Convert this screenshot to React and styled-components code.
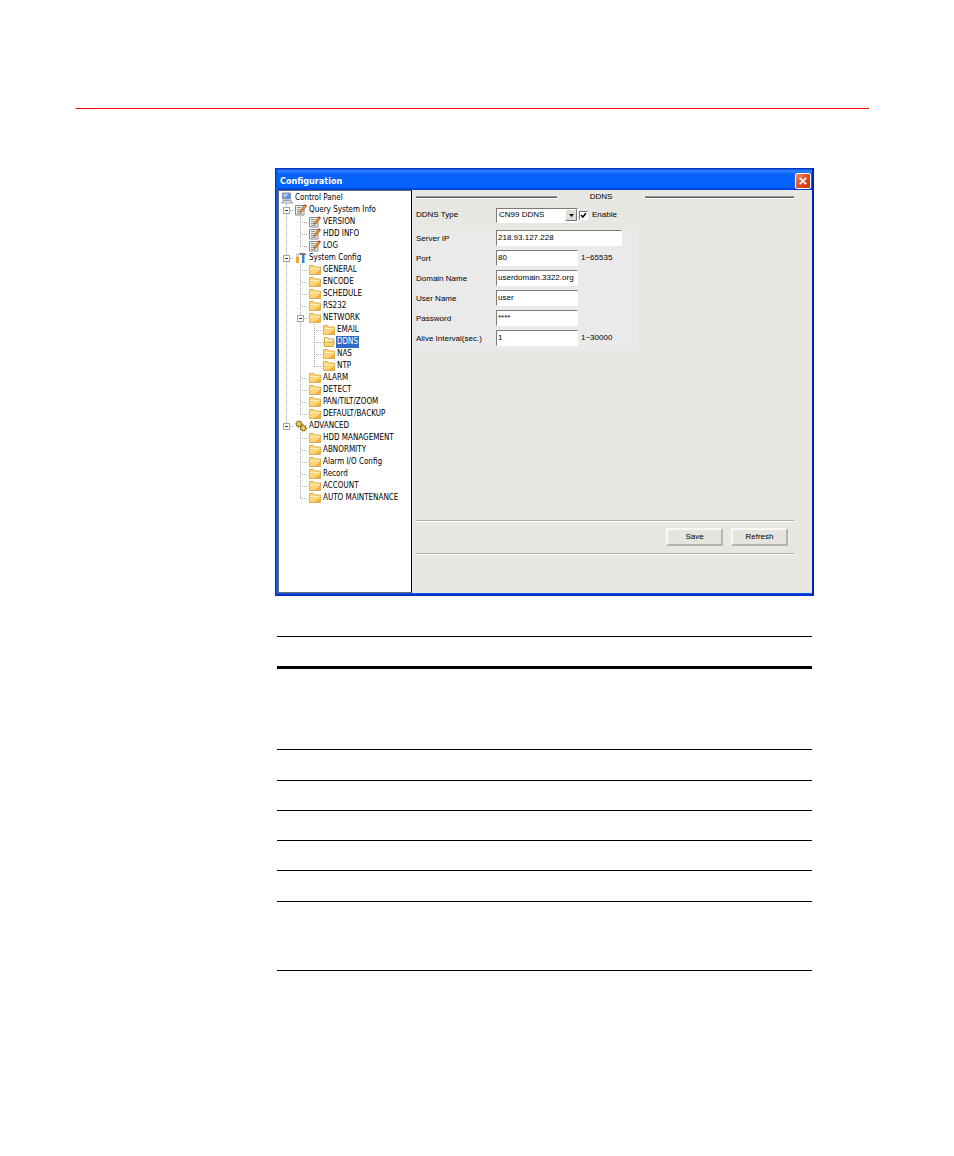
import React, { useState } from "react";
import styled, { createGlobalStyle, css } from "styled-components";

const TREE = [
  { label: "Control Panel", icon: "computer", guides: [] },
  { label: "Query System Info", icon: "note", guides: ["tee"], open: true },
  { label: "VERSION", icon: "note", guides: ["line", "tee"] },
  { label: "HDD INFO", icon: "note", guides: ["line", "tee"] },
  { label: "LOG", icon: "note", guides: ["line", "end"] },
  { label: "System Config", icon: "tools", guides: ["tee"], open: true },
  { label: "GENERAL", icon: "folder", guides: ["line", "tee"] },
  { label: "ENCODE", icon: "folder", guides: ["line", "tee"] },
  { label: "SCHEDULE", icon: "folder", guides: ["line", "tee"] },
  { label: "RS232", icon: "folder", guides: ["line", "tee"] },
  { label: "NETWORK", icon: "folder", guides: ["line", "tee"], open: true },
  { label: "EMAIL", icon: "folder", guides: ["line", "line", "tee"] },
  { label: "DDNS", icon: "folderOpen", guides: ["line", "line", "tee"] },
  { label: "NAS", icon: "folder", guides: ["line", "line", "tee"] },
  { label: "NTP", icon: "folder", guides: ["line", "line", "end"] },
  { label: "ALARM", icon: "folder", guides: ["line", "tee"] },
  { label: "DETECT", icon: "folder", guides: ["line", "tee"] },
  { label: "PAN/TILT/ZOOM", icon: "folder", guides: ["line", "tee"] },
  { label: "DEFAULT/BACKUP", icon: "folder", guides: ["line", "end"] },
  { label: "ADVANCED", icon: "gears", guides: ["end"], open: true },
  { label: "HDD MANAGEMENT", icon: "folder", guides: ["blank", "tee"] },
  { label: "ABNORMITY", icon: "folder", guides: ["blank", "tee"] },
  { label: "Alarm I/O Config", icon: "folder", guides: ["blank", "tee"] },
  { label: "Record", icon: "folder", guides: ["blank", "tee"] },
  { label: "ACCOUNT", icon: "folder", guides: ["blank", "tee"] },
  { label: "AUTO MAINTENANCE", icon: "folder", guides: ["blank", "end"] },
];

const FIELDS = [
  { id: "server", label: "Server IP", value: "218.93.127.228", wide: true },
  { id: "port", label: "Port", value: "80", hint: "1~65535" },
  { id: "domain", label: "Domain Name", value: "userdomain.3322.org" },
  { id: "user", label: "User Name", value: "user" },
  { id: "password", label: "Password", value: "****" },
  { id: "alive", label: "Alive Interval(sec.)", value: "1", hint: "1~30000" },
];

const TABLE_ROWS = [82, 31, 30, 30, 30, 31, 69];

function Icon({ name }) {
  return (
    <svg width="12" height="12" viewBox="0 0 12 12" aria-hidden="true">
      {name === "folder" && (
        <>
          <path d="M.5 10.5V1.500h4l1 1.500h6v7.500z" fill="#fbd678" stroke="#e0ae4a" />
          <path d="M1.500 4.500h9" stroke="#fff0b4" />
          <path d="M5 10h6V6z" fill="#f5b040" />
        </>
      )}
      {name === "folderOpen" && (
        <>
          <path d="M1.500 9.500v-8h3l1 1.500h5V6" fill="#fff4cc" stroke="#d9a33a" />
          <path d="M.5 6h11l-1.500 4.500h-8.500z" fill="#fbd46c" stroke="#dda63a" />
        </>
      )}
      {name === "note" && (
        <>
          <path d="M.5 1.500h8.500v9.500H.5z" fill="#f1f1f1" stroke="#8a8a8a" />
          <path d="M2 3.500h4M2 5.500h3M2 7.500h3M2 9.300h5" stroke="#777" strokeWidth=".8" />
          <path d="M5 8.500l.7-2.500L9.300 1l2 1.500L7.300 7.500z" fill="#f09a30" stroke="#704020" strokeWidth=".6" />
          <path d="M9.200 1.300l.8-1.100 1.800 1.400-.8 1.200z" fill="#c8382a" />
        </>
      )}
      {name === "computer" && (
        <>
          <path d="M1.500 1h8v6h-8z" fill="#5b92e6" stroke="#8a93a8" />
          <path d="M2.500 2h5L3 6z" fill="#b9d5ff" />
          <path d="M2 8.500h8l1.500 2.500H.5z" fill="#dfe3ea" stroke="#7c8598" strokeWidth=".8" />
        </>
      )}
      {name === "tools" && (
        <>
          <path d="M1.500 1.500v3.500M3.500 1.500v3.500" stroke="#aaa" strokeWidth=".8" />
          <path d="M1 5h3v6H1z" fill="#f4a72c" />
          <path d="M4.500 1h5.500l1.700 2H4.500z" fill="#777" />
          <path d="M7 3h2.500v8H7z" fill="#2f86dc" />
        </>
      )}
      {name === "gears" && (
        <>
          <circle cx="4" cy="4" r="2.600" fill="#e2bd3a" stroke="#7d621a" strokeWidth="1.800" strokeDasharray="1.300 .6" />
          <circle cx="8.200" cy="8" r="2.600" fill="#e2bd3a" stroke="#7d621a" strokeWidth="1.800" strokeDasharray="1.300 .6" />
          <circle cx="4" cy="4" r="2" fill="#e2bd3a" />
          <circle cx="8.200" cy="8" r="2" fill="#e2bd3a" />
          <circle cx="4" cy="4" r=".8" fill="#fff3b8" />
          <circle cx="8.200" cy="8" r=".8" fill="#fff3b8" />
        </>
      )}
    </svg>
  );
}

function Tree() {
  const [selected, setSelected] = useState("DDNS");

  return (
    <TreePane aria-label="Settings">
      {TREE.map((node) => (
        <TreeRow key={node.label}>
          {node.guides.map((kind, i) => (
            <Guide key={i} $kind={kind}>
              {node.open && i === node.guides.length - 1 && <Expander aria-label={"Collapse " + node.label} />}
            </Guide>
          ))}
          <IconCell>
            <Icon name={node.icon} />
          </IconCell>
          <TreeLabel $selected={node.label === selected} onClick={() => setSelected(node.label)}>
            {node.label}
          </TreeLabel>
        </TreeRow>
      ))}
    </TreePane>
  );
}

function DdnsForm() {
  return (
    <Panel>
      <Heading>
        <HeadingRule />
        <h2>DDNS</h2>
        <HeadingRule />
      </Heading>
      <TypeRow>
        <label htmlFor="type">DDNS Type</label>
        <SelectBox>
          <select id="type" defaultValue="CN99 DDNS">
            <option>CN99 DDNS</option>
          </select>
          <Arrow aria-hidden="true">
            <svg width="5" height="3" viewBox="0 0 5 3">
              <path d="M0 0h5L2.500 3z" />
            </svg>
          </Arrow>
        </SelectBox>
        <Check>
          <input type="checkbox" defaultChecked />
          Enable
        </Check>
      </TypeRow>
      <Fields>
        {FIELDS.map((field) => (
          <FieldRow key={field.id}>
            <label htmlFor={field.id}>{field.label}</label>
            <TextBox id={field.id} defaultValue={field.value} $wide={field.wide} />
            {field.hint && <span>{field.hint}</span>}
          </FieldRow>
        ))}
      </Fields>
      <Actions>
        <Button type="button">Save</Button>
        <Button type="button">Refresh</Button>
      </Actions>
    </Panel>
  );
}

function App() {
  return (
    <Page>
      <GlobalStyle />
      <TopRule />
      <Content>
        <Window>
          <TitleBar>
            <h1>Configuration</h1>
            <Close type="button" aria-label="Close">
              <svg width="8" height="8" viewBox="0 0 8 8">
                <path d="M.8.8l6.400 6.400M7.200.8L.8 7.200" stroke="#fff" strokeWidth="1.700" />
              </svg>
            </Close>
          </TitleBar>
          <Body>
            <Tree />
            <DdnsForm />
          </Body>
        </Window>
        <Parameters>
          <thead>
            <tr>
              <th />
              <th />
            </tr>
          </thead>
          <tbody>
            {TABLE_ROWS.map((height, i) => (
              <TableRow key={i} $height={height}>
                <td />
                <td />
              </TableRow>
            ))}
          </tbody>
        </Parameters>
      </Content>
    </Page>
  );
}

export default App;

const GlobalStyle = createGlobalStyle`
  * {
    box-sizing: border-box;
  }

  body {
    margin: 0;
    background: #fff;
    color: #000;
  }

  h1, h2 {
    margin: 0;
    font-size: inherit;
    font-weight: inherit;
  }

  svg {
    display: block;
  }
`;

const Page = styled.div`
  padding: 108px 85px 0 76px;
`;

const TopRule = styled.hr`
  height: 1px;
  margin: 0;
  border: 0;
  background: #f00;
`;

const Content = styled.main`
  padding: 59px 55px 0 199px;
`;

const Window = styled.section`
  border: 1px solid #0831c0;
  border-width: 1px 2px 2px 1px;
  border-right-color: #0024b0;
  background: #0a5cf5;
  padding: 0 0 1px 2px;
`;

const TitleBar = styled.header`
  display: flex;
  align-items: center;
  justify-content: space-between;
  height: 21px;
  padding: 2px 1px 0 2px;
  background: linear-gradient(#0a4fd8, #2e86ff 2px, #0a62fb 5px, #0062ff 18px, #0038c8);

  h1 {
    color: #fff;
    font: bold 9px/12px "DejaVu Sans Condensed", "DejaVu Sans", sans-serif;
  }
`;

const Close = styled.button`
  display: flex;
  align-items: center;
  justify-content: center;
  width: 16px;
  height: 16px;
  padding: 0;
  border: 1px solid #fff;
  border-radius: 2px;
  background: linear-gradient(135deg, #f0906c, #e04a22 50%, #c03a14);
`;

const Body = styled.div`
  display: flex;
  background: #e8e8e4;
`;

const TreePane = styled.nav`
  flex: none;
  width: 134px;
  height: 403px;
  padding: 1px 0 0;
  border: 1px solid #666;
  border-right-color: #000;
  background: #fff;
  font: 8px/12px "DejaVu Sans Condensed", "DejaVu Sans", sans-serif;
`;

const TreeRow = styled.div`
  display: flex;
  align-items: center;
  height: 12px;
`;

const dots = "repeating-linear-gradient(#a8a8a8 0 1px, transparent 1px 2px)";
const dashes = "repeating-linear-gradient(90deg, #a8a8a8 0 1px, transparent 1px 2px)";

const Guide = styled.span`
  display: flex;
  align-items: center;
  justify-content: center;
  flex: none;
  width: 14px;
  height: 12px;
  background-repeat: no-repeat;

  ${({ $kind }) =>
    $kind === "line" &&
    css`
      background-image: ${dots};
      background-position: 7px 0;
      background-size: 1px 12px;
    `}

  ${({ $kind }) =>
    ($kind === "tee" || $kind === "end") &&
    css`
      background-image: ${dots}, ${dashes};
      background-position: 7px 0, 7px 6px;
      background-size: 1px ${$kind === "tee" ? 12 : 6}px, 7px 1px;
    `}
`;

const Expander = styled.button`
  width: 7px;
  height: 7px;
  padding: 0;
  border: 1px solid #a8a898;
  background: linear-gradient(#333, #333) center / 3px 1px no-repeat #fff;
`;

const IconCell = styled.span`
  display: flex;
  justify-content: flex-end;
  flex: none;
  width: 14px;
`;

const TreeLabel = styled.button`
  height: 12px;
  padding: 0 1px;
  border: 0;
  margin-left: 1px;
  background: ${({ $selected }) => ($selected ? "#316ac5" : "none")};
  color: ${({ $selected }) => ($selected ? "#fff" : "#000")};
  font: inherit;
  white-space: nowrap;
`;

const Panel = styled.form`
  flex: 1;
  min-width: 0;
  padding: 1px 18px 0 4px;
  background: repeating-linear-gradient(90deg, #e4e4d866 0 1px, transparent 1px 3px),
    repeating-linear-gradient(#e4e4d866 0 1px, transparent 1px 3px), #e8e9e6;
  font: 8px/12px "Liberation Sans", Arial, sans-serif;
`;

const Heading = styled.div`
  display: grid;
  grid-template-columns: 141px 1fr 149px;
  align-items: center;
  text-align: center;
  height: 12px;
`;

const HeadingRule = styled.hr`
  width: 100%;
  height: 3px;
  margin: 0;
  border: solid;
  border-width: 1px 0;
  border-color: #9a9a94 transparent #fff;
  background: #606068;
`;

const TypeRow = styled.div`
  display: flex;
  align-items: center;
  height: 16px;
  margin-top: 4px;

  > label:first-child {
    width: 80px;
  }
`;

const sunken = css`
  border: 1px solid;
  border-color: #7c7c74 #fff #fff #7c7c74;
  border-radius: 0;
  outline: 0;
  background: #fff;
  color: #000;
  font: inherit;
`;

const SelectBox = styled.div`
  ${sunken}
  display: flex;
  align-items: center;
  width: 82px;
  height: 15px;

  select {
    flex: 1;
    min-width: 0;
    height: 13px;
    padding: 0 2px;
    border: 0;
    appearance: none;
    background: none;
    font: inherit;
  }
`;

const Arrow = styled.span`
  display: flex;
  align-items: center;
  justify-content: center;
  width: 12px;
  height: 12px;
  border: 1px solid;
  border-color: #fff #777 #777 #fff;
  background: #dedfd8;
`;

const Check = styled.label`
  display: flex;
  align-items: center;
  gap: 4px;
  margin-left: 1px;

  input {
    ${sunken}
    width: 9px;
    height: 9px;
    margin: 0;
    appearance: none;
  }

  input:checked {
    background: #fff
      url("data:image/svg+xml,%3Csvg xmlns='http://www.w3.org/2000/svg' viewBox='0 0 7 7'%3E%3Cpath d='M1 3l1.800 2L6 1.300' fill='none' stroke='%23000' stroke-width='1.500'/%3E%3C/svg%3E")
      center / 7px 7px no-repeat;
  }
`;

const Fields = styled.div`
  display: flex;
  flex-direction: column;
  gap: 4px;
  width: 222px;
  padding-bottom: 4px;
  margin-top: 7px;
  background: #eaeaea;
`;

const FieldRow = styled.div`
  display: flex;
  align-items: center;
  height: 16px;

  label {
    width: 80px;
    padding-top: 2px;
    white-space: nowrap;
  }

  span {
    margin-left: 3px;
  }
`;

const TextBox = styled.input`
  ${sunken}
  width: ${({ $wide }) => ($wide ? 126 : 82)}px;
  height: 16px;
  padding: 0 0 1px 1px;
`;

const Actions = styled.div`
  display: flex;
  align-items: center;
  justify-content: flex-end;
  gap: 8px;
  height: 34px;
  padding-right: 6px;
  margin-top: 170px;
  border: solid #b0b0a4;
  border-width: 1px 0;
  box-shadow: 0 1px #fff, inset 0 1px #fff;
`;

const Button = styled.button`
  width: 57px;
  height: 18px;
  padding: 0;
  border: 2px solid;
  border-color: #f8f8f4 #b4b4a8 #b4b4a8 #f8f8f4;
  background: #e4e5df;
  color: #000;
  font: inherit;
`;

const Parameters = styled.table`
  width: calc(100% - 4px);
  margin: 40px 2px 0;
  border-collapse: collapse;
  border-top: 1px solid #000;

  th {
    height: 31px;
    padding: 0;
    border-bottom: 3px solid #000;
  }
`;

const TableRow = styled.tr`
  height: ${({ $height }) => $height}px;

  td {
    padding: 0;
    border-bottom: 1px solid #000;
  }
`;
